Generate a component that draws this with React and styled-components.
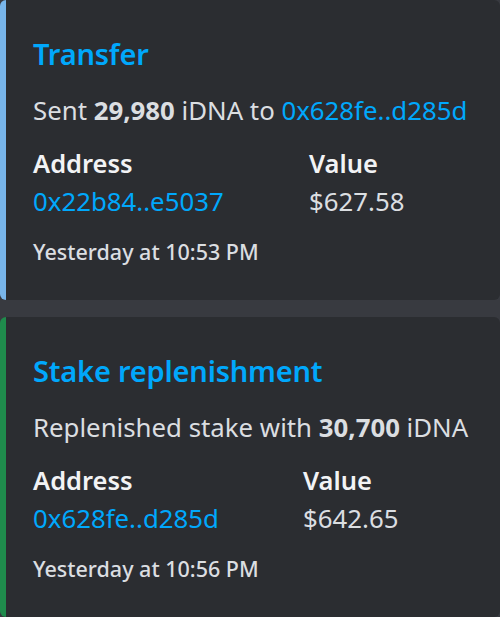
import React from "react";
import styled, { createGlobalStyle } from "styled-components";

const Global = createGlobalStyle`
  html, body {
    margin: 0;
    padding: 0;
    background: #383a40;
  }
  body {
    font-family: "Noto Sans", "DejaVu Sans", sans-serif;
  }
`;

const List = styled.div`
  display: flex;
  flex-direction: column;
  gap: 17px;
  width: 500px;
`;

const Embed = styled.div`
  background: #2b2d31;
  border-left: 6px solid ${p => p.accent};
  border-radius: 6px;
  height: 300px;
  box-sizing: border-box;
  padding: 35px 12px 0 27px;
  display: flex;
  flex-direction: column;
`;

const Title = styled.div`
  color: #00a8fc;
  font-size: 29px;
  font-weight: 600;
  line-height: 38px;
  letter-spacing: -0.2px;
`;

const Desc = styled.div`
  color: #dbdee1;
  font-size: 25.8px;
  line-height: 32px;
  margin-top: 21px;
  white-space: nowrap;

  b {
    font-weight: 700;
  }
`;

const Link = styled.span`
  color: #00a8fc;
`;

const Fields = styled.div`
  display: grid;
  grid-template-columns: ${p => p.split}px 1fr;
  margin-top: 16px;
`;

const Field = styled.div`
  display: flex;
  flex-direction: column;
`;

const Name = styled.div`
  color: #f2f3f5;
  font-size: 25.5px;
  font-weight: 600;
  line-height: 43px;
`;

const Value = styled.div`
  color: #dbdee1;
  font-size: 25.8px;
  line-height: 32px;
`;

const Footer = styled.div`
  color: #dbdee1;
  font-size: 21.5px;
  font-weight: 500;
  line-height: 28px;
  margin-top: 21px;
`;

const embeds = [
  {
    accent: "#78b5ea",
    title: "Transfer",
    desc: (
      <>
        Sent <b>29,980</b> iDNA to <Link>0x628fe..d285d</Link>
      </>
    ),
    address: "0x22b84..e5037",
    value: "$627.58",
    time: "Yesterday at 10:53 PM",
    split: 276
  },
  {
    accent: "#1f8b4c",
    title: "Stake replenishment",
    desc: (
      <>
        Replenished stake with <b>30,700</b> iDNA
      </>
    ),
    address: "0x628fe..d285d",
    value: "$642.65",
    time: "Yesterday at 10:56 PM",
    split: 270
  }
];

export default function App() {
  return (
    <>
      <Global />
      <List>
        {embeds.map(e => (
          <Embed key={e.title} accent={e.accent}>
            <Title>{e.title}</Title>
            <Desc>{e.desc}</Desc>
            <Fields split={e.split}>
              <Field>
                <Name>Address</Name>
                <Value>
                  <Link>{e.address}</Link>
                </Value>
              </Field>
              <Field>
                <Name>Value</Name>
                <Value>{e.value}</Value>
              </Field>
            </Fields>
            <Footer>{e.time}</Footer>
          </Embed>
        ))}
      </List>
    </>
  );
}
